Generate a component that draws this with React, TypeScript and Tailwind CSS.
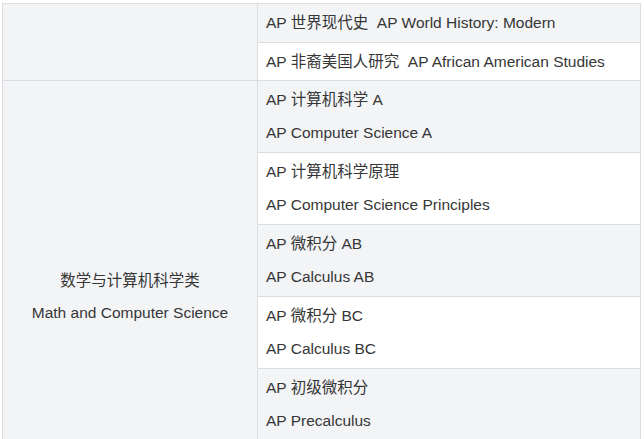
import React from 'react';

type Course = { zh: string; en: string };

const singles: Course[] = [
  { zh: 'AP 世界现代史', en: 'AP World History: Modern' },
  { zh: 'AP 非裔美国人研究', en: 'AP African American Studies' },
];

const mathCourses: Course[] = [
  { zh: 'AP 计算机科学 A', en: 'AP Computer Science A' },
  { zh: 'AP 计算机科学原理', en: 'AP Computer Science Principles' },
  { zh: 'AP 微积分 AB', en: 'AP Calculus AB' },
  { zh: 'AP 微积分 BC', en: 'AP Calculus BC' },
  { zh: 'AP 初级微积分', en: 'AP Precalculus' },
  { zh: 'AP 统计学', en: 'AP Statistics' },
];

const cell = 'border border-[#dcdde0] px-2 align-middle';

export default function App() {
  return (
    <div
      className="pt-[3px] pl-[2px] pr-[3px] bg-white text-[15.5px] text-[#363636]"
      style={{ fontFamily: '"Liberation Sans", "Noto Sans CJK SC", sans-serif' }}
    >
      <table className="w-[639px] border-collapse table-fixed">
        <colgroup>
          <col className="w-[255px]" />
          <col />
        </colgroup>
        <tbody>
          {singles.map((c, i) => (
            <tr key={c.en} className={i % 2 === 0 ? 'bg-[#f3f4f6]' : 'bg-white'}>
              {i === 0 && <td rowSpan={2} className={`${cell} bg-[#f3f4f6]`} />}
              <td className={`${cell} leading-[22px] ${i === 0 ? 'py-2' : 'pt-2 pb-[7px]'}`}>
                {c.zh}&nbsp;&nbsp;{c.en}
              </td>
            </tr>
          ))}
          {mathCourses.map((c, i) => (
            <tr key={c.en} className={i % 2 === 0 ? 'bg-[#f3f4f6]' : 'bg-white'}>
              {i === 0 && (
                <td rowSpan={mathCourses.length} className={`${cell} bg-[#f3f4f6] text-center`}>
                  <p className="leading-[22px]">数学与计算机科学类</p>
                  <p className="leading-[22px] mt-[10px]">Math and Computer Science</p>
                </td>
              )}
              <td className={`${cell} py-2`}>
                <p className="leading-[22px]">{c.zh}</p>
                <p className="leading-[22px] mt-[11px]">{c.en}</p>
              </td>
            </tr>
          ))}
        </tbody>
      </table>
    </div>
  );
}
